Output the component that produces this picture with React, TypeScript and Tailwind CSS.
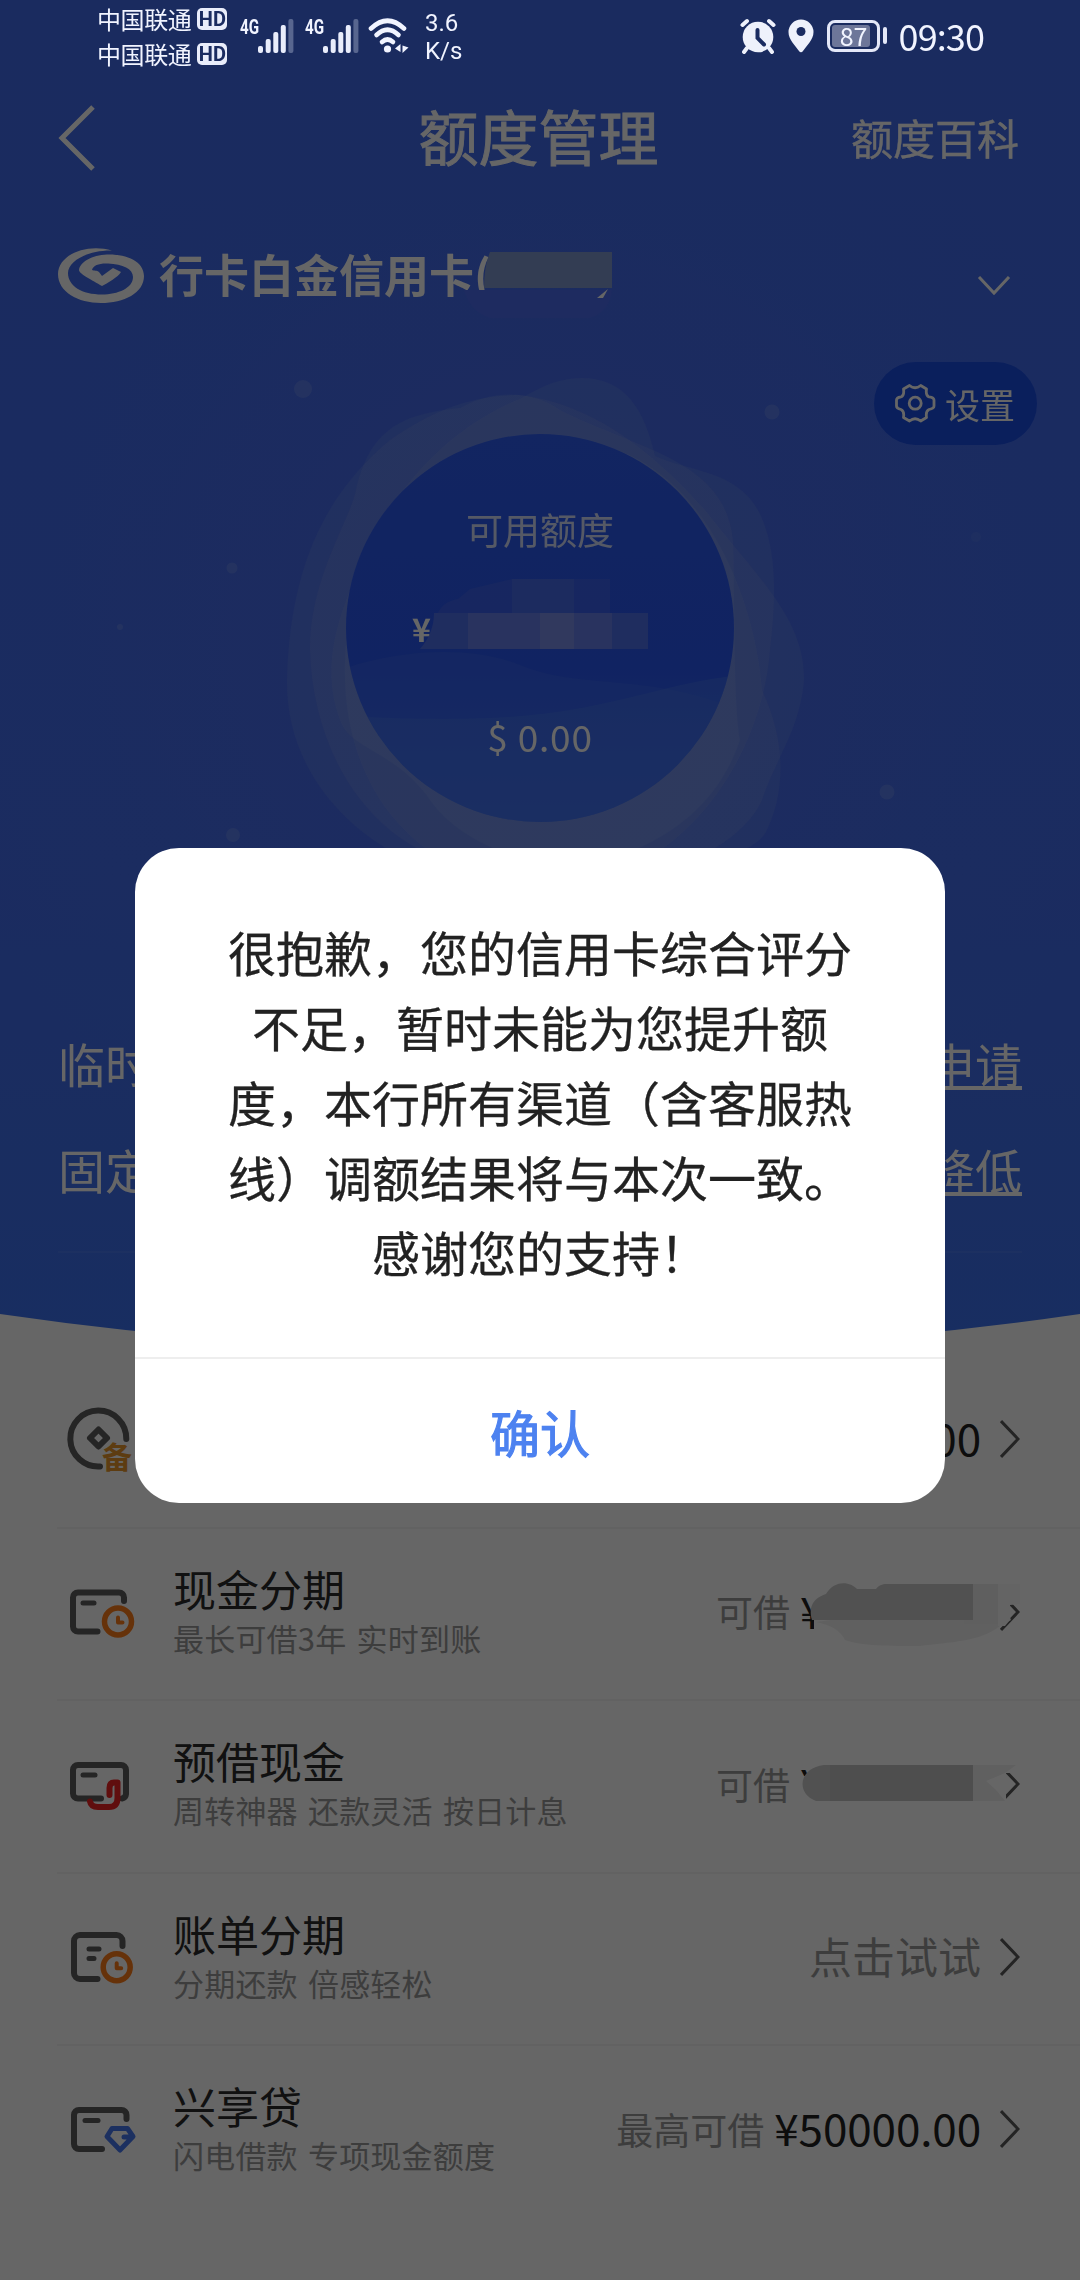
import type { ReactNode } from 'react';

interface LoanRow {
  id: string;
  icon: ReactNode;
  title?: string;
  subtitle?: string;
  label?: string;
  amount?: string;
  hint?: string;
  mask?: ReactNode;
}

const SignalBars = () => (
  <svg width="36" height="34" viewBox="0 0 36 34" fill="#e9edfb">
    <rect x="0" y="27" width="5" height="7" rx="2" />
    <rect x="7.7" y="20" width="5" height="14" rx="2" />
    <rect x="15.3" y="13" width="5" height="21" rx="2" />
    <rect x="22.8" y="6" width="5" height="28" rx="2" />
    <rect x="30.4" y="0" width="5" height="34" rx="2" opacity="0.3" />
  </svg>
);

const Carrier = () => (
  <div className="flex h-[35px] items-center gap-[6px]">
    <span className="text-[24px] leading-[35px] tracking-[-0.4px]">中国联通</span>
    <span className="flex h-[22px] w-[30px] items-center justify-center rounded-[5px] bg-[#e9edfb] font-['Roboto',sans-serif] text-[20px] font-bold leading-none text-[#1a2b60]">
      HD
    </span>
  </div>
);

const CellSignal = () => (
  <div className="flex items-start">
    <span className="block w-[18px] origin-left scale-x-[0.76] font-['Roboto',sans-serif] text-[20px] font-bold leading-[16px]">
      4G
    </span>
    <SignalBars />
  </div>
);

function StatusBar() {
  return (
    <div className="relative z-20 flex h-[72px] items-start pl-[97px] pr-[96px] text-[#f1f4ff]">
      <div className="w-[143px] pt-[1px]">
        <Carrier />
        <Carrier />
      </div>
      <div className="flex gap-[11px] pt-[19px]">
        <CellSignal />
        <CellSignal />
      </div>
      <svg className="ml-[9px] mt-[17px]" width="42" height="36" viewBox="0 0 42 36" fill="none" stroke="#f1f4ff" strokeLinecap="round">
        <path d="M3 11.5Q19.5 -4 36 11.5" strokeWidth="4.6" />
        <path d="M8.5 18Q19.5 7.5 30.5 18" strokeWidth="4.6" />
        <path d="M14 25Q19.5 20 25 25" strokeWidth="4.6" />
        <circle cx="19.5" cy="32" r="3.6" fill="#f1f4ff" stroke="none" />
        <path d="M27 31.5L32.5 27V35Z M34.5 28.5V36L40.5 30.5Z" fill="#f1f4ff" stroke="none" />
      </svg>
      <div className="ml-[15px] pt-[9px] font-['Roboto',sans-serif] text-[24px] leading-[28px]">
        <div>3.6</div>
        <div>K/s</div>
      </div>
      <div className="ml-auto flex items-center pt-[14px]">
        <svg width="36" height="36" viewBox="0 0 36 36" fill="none" strokeLinecap="round">
          <circle cx="18" cy="19" r="15.3" fill="#eef1fb" />
          <path d="M2.5 7L7 3M33.5 7L29 3M7 30L4 34M29 30L32 34" stroke="#eef1fb" strokeWidth="4" />
          <path d="M17.5 12V20L24 26.5" stroke="#1a2b60" strokeWidth="4" />
        </svg>
        <svg className="ml-[12px]" width="26" height="34" viewBox="0 0 26 34">
          <path d="M13 0.5a12.5 12.5 0 0 1 12.5 12.5C25.5 21 18.5 26.5 14.8 32.3a2.2 2.2 0 0 1-3.6 0C7.5 26.5 0.5 21 0.5 13A12.5 12.5 0 0 1 13 0.5Z" fill="#eef1fb" />
          <circle cx="13" cy="12.5" r="4.5" fill="#1a2b60" />
        </svg>
        <div className="ml-[13px] flex h-[32px] w-[53px] items-center rounded-[8px] border-[3px] border-[#e4e8f8] p-[2px]">
          <div className="flex h-full w-[38px] items-center justify-center rounded-[3px] bg-[#6d7699] pl-[6px] text-[25px] leading-none">
            87
          </div>
        </div>
        <div className="ml-[3px] h-[17px] w-[4px] rounded-full bg-[#e4e8f8]" />
        <span className="ml-[12px] mt-[-1px] text-[36px] leading-[44px] tracking-[-0.9px]">09:30</span>
      </div>
    </div>
  );
}

function HeroBackdrop() {
  return (
    <svg className="absolute left-0 top-0" width="1080" height="1360" viewBox="0 0 1080 1360">
      <defs>
        <linearGradient id="sheet" x1="0" y1="0" x2="0" y2="1">
          <stop offset="0" stopColor="#416bee" />
          <stop offset="0.65" stopColor="#446df0" />
          <stop offset="1" stopColor="#3d73f2" />
        </linearGradient>
        <radialGradient id="glow" cx="540" cy="640" r="620" gradientUnits="userSpaceOnUse">
          <stop offset="0" stopColor="#5068ee" stopOpacity="0.7" />
          <stop offset="0.6" stopColor="#4a70ee" stopOpacity="0.3" />
          <stop offset="1" stopColor="#3c78f0" stopOpacity="0" />
        </radialGradient>
        <linearGradient id="disc" x1="0" y1="0" x2="0" y2="1">
          <stop offset="0" stopColor="#2d5cf2" />
          <stop offset="0.6" stopColor="#2a58f4" />
          <stop offset="1" stopColor="#3a6cf8" />
        </linearGradient>
        <clipPath id="disc-clip">
          <circle cx="540" cy="628" r="194" />
        </clipPath>
      </defs>
      <path d="M0 0H1080V1314Q820 1352 540 1352Q260 1352 0 1314Z" fill="url(#sheet)" />
      <path d="M0 200H1080V1100H0Z" fill="url(#glow)" />
      <g fill="#fff" opacity="0.12">
        <circle cx="303" cy="389" r="9" />
        <circle cx="772" cy="412" r="7.5" />
        <circle cx="232" cy="568" r="5.5" />
        <circle cx="120" cy="627" r="3" />
        <circle cx="976" cy="537" r="5" opacity="0.4" />
        <circle cx="887" cy="792" r="7.5" />
        <circle cx="233" cy="835" r="7" />
      </g>
      <g fill="#dfeade" fillOpacity="0.085">
        <path d="M522 398C545 384 562 378 582 378C625 378 645 410 655 456C690 472 735 470 758 510C778 548 776 600 770 650C764 740 700 870 560 890C430 890 340 800 345 660C350 520 440 430 522 398Z" />
        <path d="M356 490C370 430 400 414 460 408C500 385 540 395 560 410C640 450 725 460 733 540C735 580 733 700 740 740C700 860 560 880 480 870C360 850 312 740 310 650C309 580 350 520 356 490Z" />
        <path d="M390 440C440 405 480 395 520 395C600 405 660 460 705 510C760 580 805 620 804 680C800 730 775 760 762 800C740 850 650 890 540 890C400 890 285 800 287 680C290 560 330 490 390 440Z" />
        <path d="M350 590C380 520 480 440 560 440C700 440 756 600 762 690C790 750 782 800 766 832C740 880 500 900 430 800C395 750 350 750 340 720C325 680 330 640 350 590Z" />
      </g>
      <circle cx="540" cy="628" r="194" fill="url(#disc)" />
      <g clipPath="url(#disc-clip)">
        <path d="M346 668C400 650 470 645 520 665C580 690 640 672 734 708V830H346Z" fill="#4a78f4" opacity="0.25" />
        <path d="M346 716C500 724 560 715 640 695C680 685 710 678 734 676V830H346Z" fill="#4c7cf2" opacity="0.4" />
      </g>
    </svg>
  );
}

const BankLogo = () => (
  <svg width="88" height="58" viewBox="0 0 88 58">
    <path
      d="M54 3.5C28 -4 0 8 0 27C0 45 20 56 43 56C66 56 86 46 86 29C86 14 68 7 49 7.5C34 8 22 15 21 23C21 27 34 33 44 39C50 36 60 30 63 25L55 21L44 29L41 25C39 23 36 24 34 23C35 18 42 16 50 16.5C65 17 75 22 75 30C75 41 60 47.5 44 47.5C24 47.5 10 39 10 26C10 14 30 3 54 3.5Z"
      fill="#fff"
    />
  </svg>
);

const Chevron = () => (
  <svg width="20" height="40" viewBox="0 0 20 40" fill="none" stroke="#5a5a5a" strokeWidth="3">
    <path d="M1 2L18 20L1 38" />
  </svg>
);

const CoinIcon = () => (
  <div className="relative mt-[2px] size-[72px]">
    <svg width="72" height="72" viewBox="0 0 72 72" fill="none" stroke="#5c5c5c" strokeWidth="6" strokeLinecap="round">
      <path d="M64.3 33A28 28 0 1 0 38 60.5" />
      <path d="M36.5 23.5L45 32L36.5 40.5L28 32Z" strokeLinejoin="round" />
    </svg>
    <span className="absolute left-[40px] top-[33px] text-[30px] font-bold leading-[32px] text-[#e8962c]">备</span>
  </div>
);

const Clock = ({ cx, cy }: { cx: number; cy: number }) => (
  <g stroke="#ff7d1a">
    <circle cx={cx} cy={cy} r="13.5" strokeWidth="5.5" />
    <path d={`M${cx} ${cy - 4}v5h4.5`} strokeWidth="4" />
  </g>
);

const CardIcon = ({ children }: { children: ReactNode }) => (
  <svg width="76" height="72" viewBox="0 0 76 72" fill="none" stroke="#5c5c5c" strokeWidth="6" strokeLinecap="round" strokeLinejoin="round">
    {children}
  </svg>
);

const rows: LoanRow[] = [
  {
    id: 'reserve',
    icon: <CoinIcon />,
    amount: '0.00',
  },
  {
    id: 'cash',
    icon: (
      <CardIcon>
        <path d="M62 23V19.5a5 5 0 0 0-5-5H16a5 5 0 0 0-5 5V48.5a5 5 0 0 0 5 5H35.5" />
        <path d="M21 25H32" strokeWidth="5" />
        <Clock cx={56} cy={43.5} />
      </CardIcon>
    ),
    title: '现金分期',
    subtitle: '最长可借3年 实时到账',
    label: '可借',
    mask: (
      <svg className="overflow-visible" width="220" height="84" viewBox="0 0 220 84">
        <path d="M14 40H40V64H14Z" fill="#fff" />
        <path d="M16 46L30 44H205L200 50C180 66 150 66 120 70C90 70 60 70 45 64Q38 50 16 46Z" fill="#f1f1f1" />
        <path d="M164 8H206V30L211 44L204 48H164Z" fill="#eeeeee" />
        <path d="M198 8H220V28L210 29V44L205 50H198Z" fill="#fafafa" />
        <path d="M12 44C8 30 14 22 26 18C34 4 50 5 57 13H76C80 8 84 8 88 8H173V44Z" fill="#cacaca" />
      </svg>
    ),
  },
  {
    id: 'advance',
    icon: (
      <CardIcon>
        <path d="M39 48.5H16a5 5 0 0 1-5-5V20a5 5 0 0 1 5-5H59a5 5 0 0 1 5 5V44a5 5 0 0 1-4 4.5" />
        <path d="M21 25H33" strokeWidth="5" />
        <path d="M47.5 45V38Q47.5 32.5 52 32.5H55.5V48Q55.5 57 47 57H36Q29 57 28 51.5" stroke="#f02424" />
      </CardIcon>
    ),
    title: '预借现金',
    subtitle: '周转神器 还款灵活 按日计息',
    label: '可借',
    mask: (
      <svg className="overflow-visible" width="220" height="84" viewBox="0 0 220 84">
        <path d="M190 0H222V25L206 25V56H190Z" fill="#fff" />
        <path d="M-4 28H34V62H-4ZM8 16H34V40H8Z" fill="#fff" />
        <path d="M164 17H216L205 25L186 33L196 42L205 53H164Z" fill="#efefef" />
        <path d="M24 17H173V53H16C-4 46 -2 20 24 17Z" fill="#cacaca" />
        <path d="M30 17H173V53H30Z" fill="#c2c2c2" />
      </svg>
    ),
  },
  {
    id: 'bill',
    icon: (
      <CardIcon>
        <path d="M60.5 23V18a6 6 0 0 0-6-6H18a6 6 0 0 0-6 6V50a6 6 0 0 0 6 6H35.5" />
        <path d="M27 26H37M27 35.5H32" strokeWidth="5" />
        <Clock cx={54.7} cy={44.2} />
      </CardIcon>
    ),
    title: '账单分期',
    subtitle: '分期还款 倍感轻松',
    hint: '点击试试',
  },
  {
    id: 'xingxiang',
    icon: (
      <CardIcon>
        <path d="M64.5 24V20a5 5 0 0 0-5-5H17a5 5 0 0 0-5 5V49a5 5 0 0 0 5 5H40" />
        <path d="M23 25.5H36" strokeWidth="5" />
        <path d="M50 33.5H65.5L71 41.5L58 55L45 41.5ZM62 42H69" stroke="#4878f0" strokeWidth="5" />
      </CardIcon>
    ),
    title: '兴享贷',
    subtitle: '闪电借款 专项现金额度',
    label: '最高可借',
    amount: '¥50000.00',
  },
];

function Hero() {
  return (
    <div className="relative text-white">
      <div className="flex h-[132px] items-center justify-between pl-[58px] pr-[61px]">
        <svg width="168" height="66" viewBox="0 0 168 66" fill="none" stroke="#fff" strokeWidth="5">
          <path d="M35 2L4 33L35 64" />
        </svg>
        <h1 className="mt-[-6px] text-[60px] leading-[72px] [-webkit-text-stroke:0.9px_currentColor]">额度管理</h1>
        <span className="mt-[-2px] text-[42px] leading-[60px] [-webkit-text-stroke:0.4px_currentColor]">额度百科</span>
      </div>

      {/* Card selector */}
      <div className="relative mt-[28px] flex h-[88px] items-center pl-[58px] pr-[69px]">
        <BankLogo />
        <span className="ml-[13px] mt-[-4px] text-[45px] font-bold leading-[60px]">行卡白金信用卡(</span>
        <svg className="absolute left-[460px] top-[18px]" width="156" height="72" viewBox="0 0 156 72">
          <path d="M4 40H152Q150 62 130 68H30Q10 62 4 40Z" fill="#4b6cf0" />
          <path d="M30 2H152V38H24Q24 16 30 2Z" fill="#8099d0" />
          <path d="M148 39L143 48H137Z" fill="#fff" />
        </svg>
        <svg className="ml-auto mt-[20px]" width="34" height="20" viewBox="0 0 34 20" fill="none" stroke="#fff" strokeWidth="3">
          <path d="M2 1L17 17L32 1" />
        </svg>
      </div>

      <div className="mt-[42px] flex justify-end pr-[43px]">
        <div className="flex h-[83px] w-[163px] items-center rounded-full bg-[#1a4ee6] pl-[21px]">
          <svg width="41" height="39" viewBox="0 0 41 39" fill="none" stroke="#fff" strokeWidth="2.8" strokeLinejoin="round">
            <path d="M14.5 1.5Q20 6 25.7 1.5L31.5 5Q30.5 12 34 12.8Q39 13.5 39 16V22Q39 24.5 34 25.5Q30.5 27 31.5 33.5L25.7 37Q20 32.5 14.5 37L8.5 33.5Q9.5 27 6 25.5Q1.5 24.5 1.5 22V16Q1.5 13.5 6 12.8Q9.5 12 8.5 5Z" />
            <circle cx="20.2" cy="19.2" r="6" />
          </svg>
          <span className="ml-[9px] text-[35px] leading-[50px]">设置</span>
        </div>
      </div>

      {/* Available limit */}
      <div className="relative mt-[-12px] flex h-[388px] flex-col items-center pt-[68px]">
        <span className="text-[37px] leading-[56px] opacity-80">可用额度</span>
        <div className="mt-[50px] flex w-[256px] items-center">
          <span className="text-[32px] font-bold leading-[42px]">¥</span>
        </div>
        <svg className="absolute left-[412px] top-[140px]" width="240" height="112" viewBox="0 0 240 112">
          <path d="M24 44Q30 28 46 26L58 16L100 6H198V40H24Z" fill="#4a68ec" opacity="0.5" />
          <path d="M100 6H162V40H100Z" fill="#6480ea" opacity="0.35" />
          <path d="M22 40H236V76H8Q22 60 22 40Z" fill="#5c78ec" opacity="0.75" />
          <path d="M56 40H200V76H56Z" fill="#8494ec" opacity="0.45" />
          <path d="M128 40H162V76H128Z" fill="#a0acea" opacity="0.35" />
        </svg>
        <span className="mt-[59px] text-[37px] leading-[56px] tracking-[0.8px]">$ 0.00</span>
      </div>

      {/* Adjustment entries */}
      <div className="mt-[212px] pl-[58px] pr-[58px] text-[47px] leading-[60px]">
        <div className="flex h-[106px] justify-between">
          <span>临时</span>
          <span className="underline decoration-[4px] underline-offset-[3px]">申请</span>
        </div>
        <div className="flex h-[112px] justify-between">
          <span>固定</span>
          <span className="underline decoration-[4px] underline-offset-[3px]">降低</span>
        </div>
        <div className="border-b-2 border-white/5" />
      </div>
    </div>
  );
}

function LoanItem({ row }: { row: LoanRow }) {
  return (
    <div className="flex h-[172.5px] items-center border-b-2 border-[#f6f6f6] pr-[60px] last:border-transparent">
      <div className="w-[116px] shrink-0 pl-[5px]">{row.icon}</div>
      {row.title && (
        <div className="mt-[-6px]">
          <div className="text-[43px] leading-[51px] text-[#2b2b2b]">{row.title}</div>
          <div className="mt-[3px] text-[31px] leading-[42px] tracking-[0.2px] text-[#999999] [word-spacing:3px]">
            {row.subtitle}
          </div>
        </div>
      )}
      <div className="ml-auto mt-[-8px] flex items-center">
        {row.label && <span className="mt-[3px] text-[37px] leading-[54px] text-[#999999]">{row.label}</span>}
        {row.amount && (
          <span className="ml-[10px] mt-[-1px] text-[44px] leading-[60px] tracking-[-0.1px] text-[#222222]">
            {row.amount}
          </span>
        )}
        {row.hint && <span className="text-[43px] leading-[60px] text-[#999999]">{row.hint}</span>}
        {row.mask && (
          <span className="ml-[10px] block w-[181px] text-[44px] leading-[60px] text-[#222222]">¥</span>
        )}
        <span className="relative ml-[19px] mt-[4px] block">
          <Chevron />
          {row.mask && <span className="absolute left-[-200px] top-[-16px] block w-[220px]">{row.mask}</span>}
        </span>
      </div>
    </div>
  );
}

function RejectDialog() {
  return (
    <div className="absolute left-[135px] top-[848px] z-20 w-[810px] overflow-hidden rounded-[44px] bg-white">
      <p className="h-[509px] px-[93px] pt-[66px] text-center text-[48px] leading-[75px] text-[#222222] [-webkit-text-stroke:0.3px_currentColor]">
        很抱歉，您的信用卡综合评分不足，暂时未能为您提升额度，本行所有渠道（含客服热线）调额结果将与本次一致。感谢您的支持！
      </p>
      <button className="h-[146px] w-full border-t-2 border-[#eeeeee] text-[50px] text-[#4d82f0] [-webkit-text-stroke:1.2px_currentColor]">
        确认
      </button>
    </div>
  );
}

export default function App() {
  return (
    <div className="relative h-[2280px] w-[1080px] overflow-hidden bg-white font-['Noto_Sans_CJK_SC',sans-serif]">
      <HeroBackdrop />
      <StatusBar />
      <div className="h-[1284px]">
        <Hero />
      </div>
      <div className="pl-[57px]">
        {rows.map((row) => (
          <LoanItem key={row.id} row={row} />
        ))}
      </div>
      <div className="absolute inset-0 z-10 bg-black/60" />
      <RejectDialog />
    </div>
  );
}
